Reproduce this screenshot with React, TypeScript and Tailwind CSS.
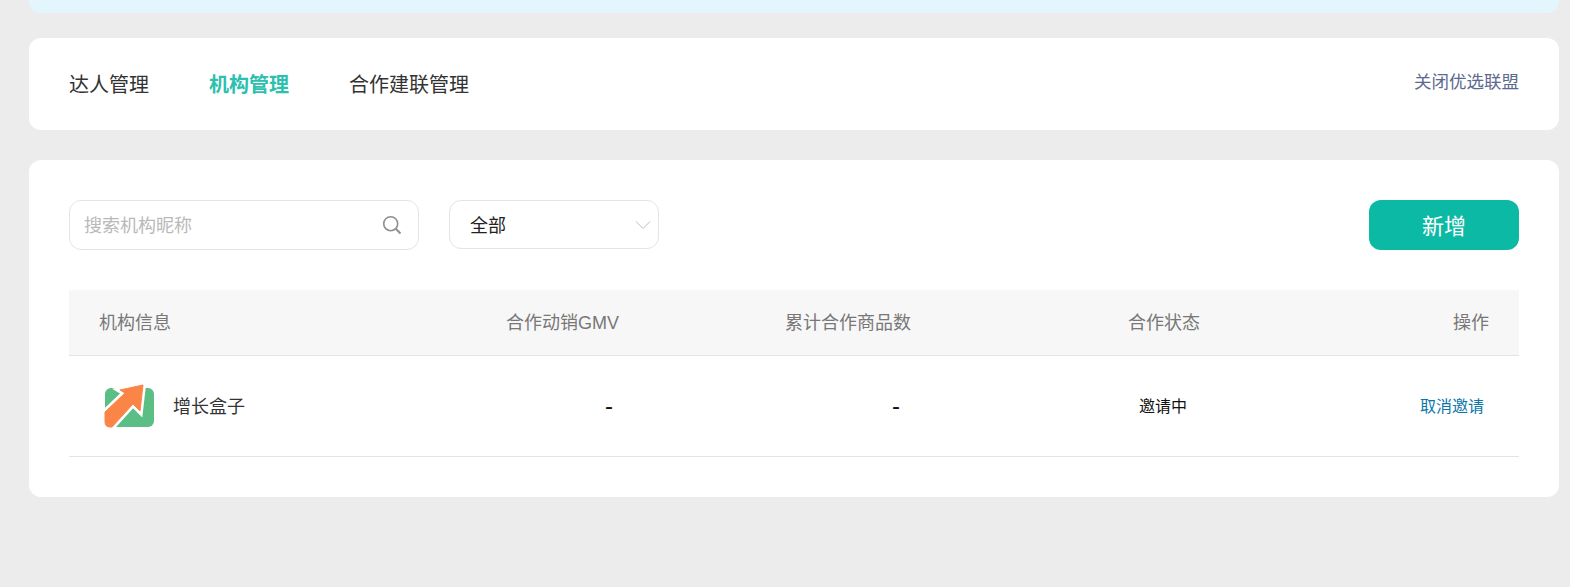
const FONT = "font-['Liberation_Sans','Noto_Sans_CJK_SC',sans-serif]";

function Logo() {
  const arrow = "M1 29L21 10L16 7L39 2L36 28L29 21L8 44H6Q1 44 1 39Z";
  return (
    <svg width="50" height="46" viewBox="0 0 50 46">
      <rect x="1" y="5" width="49" height="39" rx="6" fill="#5bbf85" />
      <path d={arrow} fill="#fff" stroke="#fff" strokeWidth="6" />
      <path d={arrow} fill="#fb8546" stroke="#fb8546" strokeWidth="1" />
    </svg>
  );
}

function SearchBox() {
  return (
    <div className="flex h-[50px] w-[350px] items-center justify-between rounded-xl border border-[#e3e4e6] pl-[14px] pr-4">
      <span className="pt-0.5 text-lg text-[#b9b9b9]">搜索机构昵称</span>
      <svg width="20" height="20" viewBox="0 0 20 20" fill="none" stroke="#8f8f8f" strokeWidth="1.6">
        <circle cx="8.7" cy="8.7" r="7" />
        <path d="M13.8 13.8L18.5 18.5" strokeWidth="2" />
      </svg>
    </div>
  );
}

function StatusSelect() {
  return (
    <div className="flex h-[49px] w-[210px] items-center justify-between rounded-xl border border-[#e3e4e6] pl-5 pr-[7px]">
      <span className="pt-0.5 text-lg text-[#222]">全部</span>
      <svg width="16" height="10" viewBox="0 0 16 10" fill="none" stroke="#bbbbbb" strokeWidth="1">
        <path d="M1 1.5L8 8.5L15 1.5" />
      </svg>
    </div>
  );
}

export default function App() {
  return (
    <div className={`${FONT} flex h-[587px] flex-col overflow-hidden bg-[#ececec] pl-[29px] pr-[11px]`}>
      <div className="h-[13px] rounded-b-xl bg-[#e3f5fd]" />

      {/* Tabs */}
      <div className="mt-[25px] flex h-[92px] items-center justify-between rounded-xl bg-white px-10">
        <div className="flex gap-[60px] pt-0.5 text-xl text-[#333]">
          <span>达人管理</span>
          <span className="font-bold text-[#2cc0ae]">机构管理</span>
          <span>合作建联管理</span>
        </div>
        <span className="mb-1 text-[17.5px] text-[#5d6a8f]">关闭优选联盟</span>
      </div>

      {/* Organisation list */}
      <div className="mt-[30px] h-[337px] rounded-xl bg-white p-10">
        <div className="flex items-start gap-[30px]">
          <SearchBox />
          <StatusSelect />
          <button className="ml-auto h-[50px] w-[150px] rounded-xl bg-[#0cb9a4] pt-0.5 text-[22px] text-white">新增</button>
        </div>

        <div className="mt-10 grid h-[66px] grid-cols-[437px_279px_342px_1fr] items-center border-b border-[#e3e4e6] bg-[#f7f7f7] text-lg text-[#777]">
          <span className="pl-[30px]">机构信息</span>
          <span>合作动销GMV</span>
          <span>累计合作商品数</span>
          <span className="flex justify-between pl-px pr-[30px]">
            <span>合作状态</span>
            <span>操作</span>
          </span>
        </div>

        <div className="grid h-[101px] grid-cols-[437px_279px_342px_1fr] items-center border-b border-[#e3e4e6] text-[#111]">
          <div className="flex items-center gap-[19px] pl-[35px]">
            <Logo />
            <span className="pt-0.5 text-lg text-[#333]">增长盒子</span>
          </div>
          <span className="pl-[99px] text-2xl">-</span>
          <span className="pl-[107px] text-2xl">-</span>
          <div className="flex items-center justify-between pl-3 pr-[35px] pt-0.5 text-base">
            <span>邀请中</span>
            <span className="text-[#0b76a8]">取消邀请</span>
          </div>
        </div>
      </div>
    </div>
  );
}
